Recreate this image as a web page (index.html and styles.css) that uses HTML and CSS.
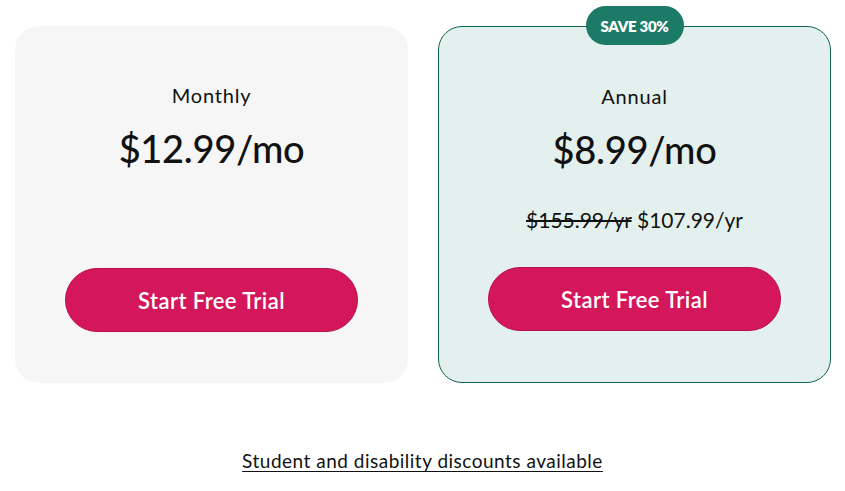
FILE: index.html
```html
<!DOCTYPE html>
<html lang="en">
<head>
<meta charset="utf-8">
<title>Pricing</title>
<link rel="stylesheet" href="styles.css">
</head>
<body>
<main class="page">
  <div class="plans">
    <section class="card card-monthly">
      <h2 class="plan-name">Monthly</h2>
      <p class="plan-price">$12.99/mo</p>
      <button class="cta">Start Free Trial</button>
    </section>
    <section class="card card-annual">
      <span class="badge">SAVE 30%</span>
      <h2 class="plan-name">Annual</h2>
      <p class="plan-price">$8.99/mo</p>
      <p class="plan-yearly"><s class="old">$155.99/yr</s> <span>$107.99/yr</span></p>
      <button class="cta">Start Free Trial</button>
    </section>
  </div>
  <p class="discounts"><a href="#">Student and disability discounts available</a></p>
</main>
</body>
</html>
```
FILE: styles.css
```css
* { box-sizing: border-box; }
html, body { margin: 0; padding: 0; background: #ffffff; }
body {
  font-family: Lato, "Noto Sans", sans-serif;
  color: #111111;
}
.page {
  padding: 26px 15px 0;
}
.plans {
  display: flex;
  gap: 30px;
}
.card {
  position: relative;
  flex: 0 0 393px;
  height: 357px;
  border-radius: 24px;
  display: flex;
  flex-direction: column;
  align-items: center;
  padding-top: 57px;
  padding-bottom: 51px;
}
.card-monthly { background: #f6f6f6; }
.card-annual {
  background: #e3f0ed;
  border: 1px solid #0d6450;
}
.badge {
  position: absolute;
  top: -21px;
  left: 50%;
  transform: translateX(-50%);
  width: 98px;
  height: 39px;
  border-radius: 20px;
  background: #1b7b67;
  color: #ffffff;
  font-weight: 800;
  font-size: 15px;
  letter-spacing: -0.3px;
  display: flex;
  align-items: center;
  justify-content: center;
}
.plan-name {
  margin: 0;
  font-size: 20px;
  line-height: 24px;
  font-weight: 400;
  letter-spacing: 0.8px;
}
.plan-price {
  margin: 18px 0 0;
  font-size: 38px;
  line-height: 46px;
  font-weight: 500;
  letter-spacing: -0.3px;
}
.plan-yearly {
  margin: 35px 0 0;
  font-size: 21px;
  line-height: 26px;
}
.old {
  text-decoration-thickness: 2px;
}
.cta {
  margin-top: auto;
  width: 293px;
  height: 64px;
  border: 1px solid #b8104b;
  border-radius: 32px;
  background: #d3175a;
  color: #ffffff;
  font-family: inherit;
  font-size: 22px;
  letter-spacing: 0.4px;
  font-weight: 600;
  cursor: pointer;
}
.discounts {
  margin: 66px 0 0;
  text-align: center;
  font-size: 19px;
  line-height: 24px;
  letter-spacing: 0.5px;
}
.discounts a {
  color: #111111;
  text-decoration: underline;
  text-underline-offset: 3px;
}
```
